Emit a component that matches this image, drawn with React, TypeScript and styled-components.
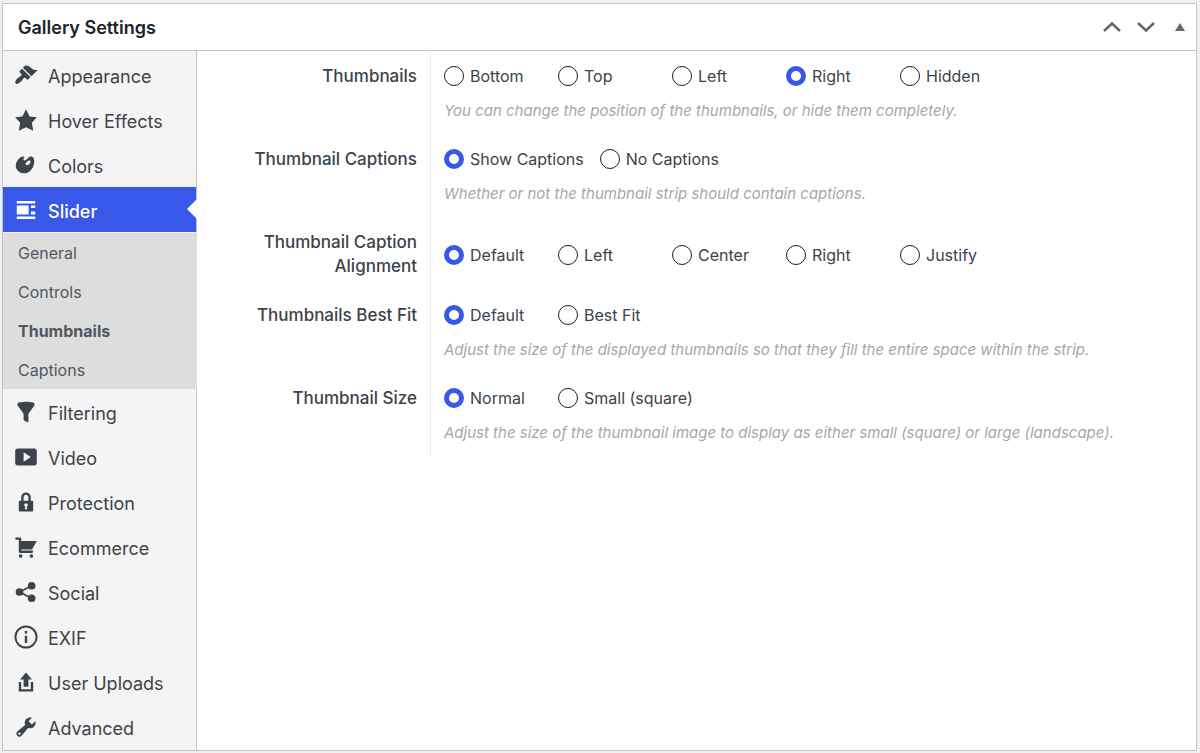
import React, { useState } from "react";
import styled, { createGlobalStyle } from "styled-components";

const color = {
  accent: "#3858e9",
  text: "#3c434a",
  heading: "#1d2327",
  border: "#c3c4c7",
  sidebar: "#f4f4f4",
  submenu: "#dddddd",
  page: "#f0f0f0",
};

const GlobalStyle = createGlobalStyle`
  * { box-sizing: border-box; }
  body {
    margin: 0;
    background: ${color.page};
    color: ${color.text};
    font-family: Inter, "Liberation Sans", sans-serif;
  }
`;

const Panel = styled.section`
  margin: 3px 3px 2px 2px;
  border: 1px solid ${color.border};
  background: #fff;
`;

const Header = styled.header`
  display: flex;
  align-items: center;
  justify-content: space-between;
  height: 47px;
  padding: 2px 7px 0 15px;
  border-bottom: 1px solid ${color.border};
`;

const Title = styled.h2`
  margin: 0;
  color: ${color.heading};
  font-size: 18px;
  font-weight: 600;
  line-height: 24px;
`;

const Actions = styled.div`
  display: flex;
`;

const IconButton = styled.button<{ $narrow?: boolean }>`
  display: flex;
  align-items: center;
  justify-content: center;
  width: ${(p) => (p.$narrow ? 18 : 34)}px;
  height: 34px;
  margin-left: ${(p) => (p.$narrow ? 8 : 0)}px;
  padding: 0 0 2px;
  border: 0;
  background: none;
  color: #646970;
  cursor: pointer;
`;

const Body = styled.div`
  display: flex;
`;

const Sidebar = styled.nav`
  flex: 0 0 194px;
  border-right: 1px solid ${color.border};
  background: ${color.sidebar};
`;

const MenuList = styled.ul`
  margin: 0;
  padding: 1px 0;
  list-style: none;
`;

const MenuLink = styled.a<{ $active?: boolean }>`
  position: relative;
  display: flex;
  align-items: center;
  gap: 10px;
  height: 45px;
  padding-left: 11px;
  background: ${(p) => (p.$active ? color.accent : "transparent")};
  color: ${(p) => (p.$active ? "#fff" : color.text)};
  font-size: 18px;
  font-weight: ${(p) => (p.$active ? 500 : 400)};
  text-decoration: none;

  &::after {
    content: "";
    display: ${(p) => (p.$active ? "block" : "none")};
    position: absolute;
    top: 12px;
    right: -1px;
    border: solid transparent;
    border-width: 10px 10px 10px 0;
    border-right-color: #fff;
  }
`;

const MenuText = styled.span`
  padding-top: 5px;
  line-height: 24px;
`;

const SubList = styled.ul`
  margin: 1px -1px 0 0;
  padding: 0;
  list-style: none;
  background: ${color.submenu};
`;

const SubLink = styled.a<{ $active?: boolean }>`
  display: block;
  padding: 2px 0 0 15px;
  color: #50575e;
  font-size: 16px;
  font-weight: ${(p) => (p.$active ? 700 : 400)};
  line-height: 37px;
  text-decoration: none;
`;

const Settings = styled.form`
  flex: 1;
  min-width: 0;
`;

const Row = styled.div`
  display: flex;
`;

const RowLabel = styled.div`
  flex: 0 0 234px;
  padding: 13px 13px 12px 40px;
  border-right: 1px solid #ececec;
  font-size: 17px;
  font-weight: 500;
  line-height: 24px;
  text-align: right;
`;

const Field = styled.div`
  display: flex;
  flex: 1;
  flex-direction: column;
  justify-content: center;
  gap: 11px;
  padding: 13px 13px 11px;
`;

const Options = styled.div`
  display: flex;
  flex-wrap: wrap;
  gap: 0 16px;
`;

const Option = styled.label`
  display: flex;
  align-items: center;
  gap: 6px;
  min-width: 98px;
  font-size: 16px;
  line-height: 24px;
`;

const Radio = styled.input`
  appearance: none;
  width: 20px;
  height: 20px;
  margin: 0;
  border: 1px solid #1e1e1e;
  border-radius: 50%;
  background: #fff;

  &:checked {
    border: 5px solid ${color.accent};
  }
`;

const Hint = styled.p`
  margin: 0;
  color: #a7a7a7;
  font-size: 15px;
  font-style: italic;
  line-height: 24px;
`;

const Glyph = ({ children }: { children: React.ReactNode }) => (
  <svg width="24" height="24" viewBox="0 0 20 20" fill="currentColor" aria-hidden="true">
    {children}
  </svg>
);

const menu: { label: string; icon: React.ReactNode; children?: string[] }[] = [
  {
    label: "Appearance",
    icon: <path d="M14.48 11.06L7.41 3.99l1.5-1.5c.5-.56 2.3-.47 3.51.32 1.21.8 1.43 1.28 2.91 2.1 1.18.64 2.45 1.26 4.45.85zm-.71.71L6.7 4.7 4.93 6.47c-.39.39-.39 1.02 0 1.41l1.06 1.06c.39.39.39 1.03 0 1.42-.6.6-1.43 1.11-2.21 1.69-.35.26-.7.53-1.01.84C1.43 14.23.4 16.08 1.4 17.07c.99 1 2.84-.03 4.18-1.36.31-.31.58-.66.85-1.02.57-.78 1.08-1.61 1.69-2.21.39-.39 1.02-.39 1.41 0l1.06 1.06c.39.39 1.02.39 1.41 0z" />,
  },
  {
    label: "Hover Effects",
    icon: <path d="M10 1l3 6 6 .75-4.12 4.62L16 19l-6-3-6 3 1.13-6.63L1 7.75 7 7z" />,
  },
  {
    label: "Colors",
    icon: <path d="M8.55 3.06c1.01.34-1.95 2.01-.1 3.13 1.04.63 3.31-2.22 4.45-2.86.97-.54 2.67-.65 3.53 1.23 1.09 2.38.14 8.57-3.79 11.06-3.97 2.5-8.97 1.23-10.7-2.66-2.01-4.53 3.12-11.09 6.61-9.9zm1.21 6.45c.73 1.64 4.7-.5 3.79-2.8-.59-1.49-4.48 1.25-3.79 2.8z" />,
  },
  {
    label: "Slider",
    icon: <path d="M2.3 2.5h15.4v2.1H2.3zM2.3 6.3h9.9v7.4H2.3zM14.1 6.3h3.6v2h-3.6zM14.1 11.3h3.6v2.4h-3.6zM2.3 15.4h15.4v2.1H2.3z" />,
    children: ["General", "Controls", "Thumbnails", "Captions"],
  },
  {
    label: "Filtering",
    icon: <path d="M3 4.5v-2s3.34-1 7-1 7 1 7 1v2l-5 7.03v6.97s-1.22-.09-2.25-.59S8 16.5 8 16.5v-4.97z" />,
  },
  {
    label: "Video",
    icon: <path d="M19 15V5c0-1.1-.9-2-2-2H3c-1.1 0-2 .9-2 2v10c0 1.1.9 2 2 2h14c1.1 0 2-.9 2-2zM8 14V6l6 4z" />,
  },
  {
    label: "Protection",
    icon: <path d="M14 9h1c.55 0 1 .45 1 1v7c0 .55-.45 1-1 1H5c-.55 0-1-.45-1-1v-7c0-.55.45-1 1-1h1V6c0-2.21 1.79-4 4-4s4 1.79 4 4v3zm-2 0V6c0-1.1-.9-2-2-2s-2 .9-2 2v3h4zm-1 7l-.36-2.15c.51-.24.86-.75.86-1.35 0-.83-.67-1.5-1.5-1.5s-1.5.67-1.5 1.5c0 .6.35 1.11.86 1.35L9 16h2z" />,
  },
  {
    label: "Ecommerce",
    icon: <path d="M6 13h9c.55 0 1 .45 1 1s-.45 1-1 1H5c-.55 0-1-.45-1-1V4H2c-.55 0-1-.45-1-1s.45-1 1-1h3c.55 0 1 .45 1 1v2h13l-4 7H6v1zm-.5 3c.83 0 1.5.67 1.5 1.5S6.33 19 5.5 19 4 18.33 4 17.5 4.67 16 5.5 16zm9 0c.83 0 1.5.67 1.5 1.5s-.67 1.5-1.5 1.5-1.5-.67-1.5-1.5.67-1.5 1.5-1.5z" />,
  },
  {
    label: "Social",
    icon: (
      <>
        <circle cx="14.7" cy="4.8" r="3.2" />
        <circle cx="4.6" cy="10" r="3.2" />
        <circle cx="14.7" cy="15.2" r="3.2" />
        <path d="M14.7 4.8L4.6 10l10.1 5.2" fill="none" stroke="currentColor" strokeWidth="1.5" />
      </>
    ),
  },
  {
    label: "EXIF",
    icon: (
      <>
        <circle cx="10" cy="10" r="8.8" fill="none" stroke="currentColor" strokeWidth="1.6" />
        <path d="M9 5h2v2H9zM9 9h2v6H9z" />
      </>
    ),
  },
  {
    label: "User Uploads",
    icon: <path d="M8 14V8H5l5-6 5 6h-3v6H8zm-2 2v-6H4v8h12.01v-8H14v6H6z" />,
  },
  {
    label: "Advanced",
    icon: <path d="M16.68 9.77c-1.34 1.34-3.3 1.67-4.95.99l-5.41 6.52c-.99.99-2.59.99-3.58 0s-.99-2.59 0-3.57l6.52-5.42c-.68-1.65-.35-3.61.99-4.95 1.28-1.28 3.12-1.62 4.72-1.06l-2.89 2.89 2.82 2.82 2.86-2.87c.53 1.58.18 3.39-1.08 4.65zM3.81 16.21c.4.39 1.04.39 1.43 0 .4-.4.4-1.04 0-1.43-.39-.4-1.03-.4-1.43 0-.39.39-.39 1.03 0 1.43z" />,
  },
];

const settings = [
  {
    id: "position",
    label: "Thumbnails",
    options: ["Bottom", "Top", "Left", "Right", "Hidden"],
    value: "Right",
    hint: "You can change the position of the thumbnails, or hide them completely.",
  },
  {
    id: "captions",
    label: "Thumbnail Captions",
    options: ["Show Captions", "No Captions"],
    value: "Show Captions",
    hint: "Whether or not the thumbnail strip should contain captions.",
  },
  {
    id: "alignment",
    label: "Thumbnail Caption Alignment",
    options: ["Default", "Left", "Center", "Right", "Justify"],
    value: "Default",
  },
  {
    id: "best-fit",
    label: "Thumbnails Best Fit",
    options: ["Default", "Best Fit"],
    value: "Default",
    hint: "Adjust the size of the displayed thumbnails so that they fill the entire space within the strip.",
  },
  {
    id: "size",
    label: "Thumbnail Size",
    options: ["Normal", "Small (square)"],
    value: "Normal",
    hint: "Adjust the size of the thumbnail image to display as either small (square) or large (landscape).",
  },
];

export default function App() {
  const [values, setValues] = useState<Record<string, string>>(
    Object.fromEntries(settings.map((s) => [s.id, s.value])),
  );

  return (
    <>
      <GlobalStyle />
      <Panel>
        <Header>
          <Title>Gallery Settings</Title>
          <Actions>
            <IconButton type="button" aria-label="Move up">
              <svg width="18" height="10" viewBox="0 0 18 10" fill="none" stroke="currentColor" strokeWidth="2.6">
                <path d="M1 9l8-7.5L17 9" />
              </svg>
            </IconButton>
            <IconButton type="button" aria-label="Move down">
              <svg width="18" height="10" viewBox="0 0 18 10" fill="none" stroke="currentColor" strokeWidth="2.6">
                <path d="M1 1l8 7.5L17 1" />
              </svg>
            </IconButton>
            <IconButton type="button" aria-label="Toggle panel" $narrow>
              <svg width="10" height="8" viewBox="0 0 10 8" fill="currentColor">
                <path d="M5 0l5 8H0z" />
              </svg>
            </IconButton>
          </Actions>
        </Header>
        <Body>
          <Sidebar aria-label="Settings sections">
            <MenuList>
              {menu.map((item) => (
                <li key={item.label}>
                  <MenuLink href="#" $active={!!item.children}>
                    <Glyph>{item.icon}</Glyph>
                    <MenuText>{item.label}</MenuText>
                  </MenuLink>
                  {item.children && (
                    <SubList>
                      {item.children.map((child) => (
                        <li key={child}>
                          <SubLink href="#" $active={child === "Thumbnails"}>
                            {child}
                          </SubLink>
                        </li>
                      ))}
                    </SubList>
                  )}
                </li>
              ))}
            </MenuList>
          </Sidebar>
          <Settings>
            {settings.map((s) => (
              <Row key={s.id}>
                <RowLabel id={`${s.id}-label`}>{s.label}</RowLabel>
                <Field>
                  <Options role="radiogroup" aria-labelledby={`${s.id}-label`}>
                    {s.options.map((option) => (
                      <Option key={option}>
                        <Radio
                          type="radio"
                          name={s.id}
                          value={option}
                          checked={values[s.id] === option}
                          onChange={() => setValues({ ...values, [s.id]: option })}
                        />
                        {option}
                      </Option>
                    ))}
                  </Options>
                  {s.hint && <Hint>{s.hint}</Hint>}
                </Field>
              </Row>
            ))}
          </Settings>
        </Body>
      </Panel>
    </>
  );
}
